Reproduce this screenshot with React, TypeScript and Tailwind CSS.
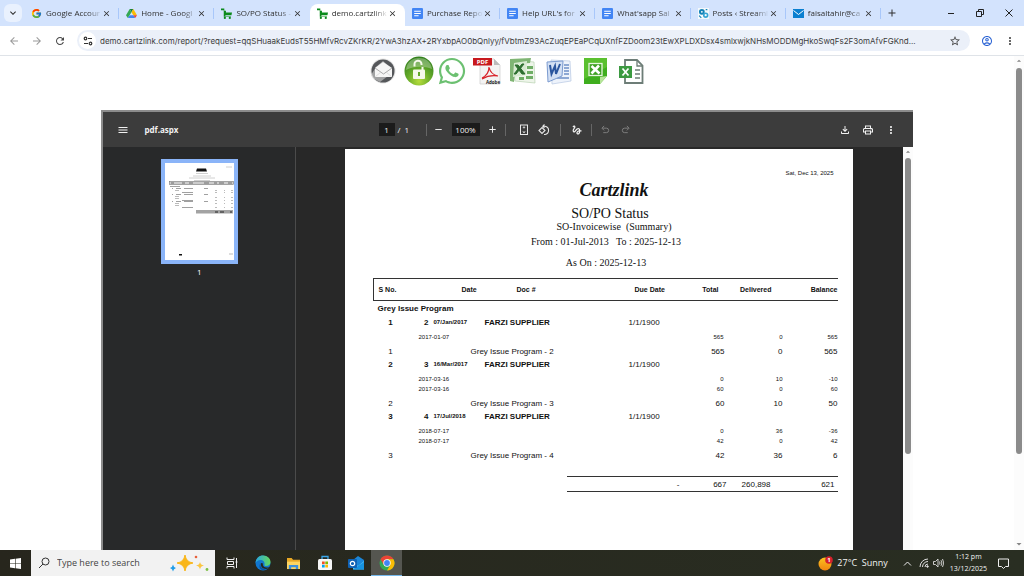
import type { ReactNode } from 'react';
import { FaWhatsapp } from 'react-icons/fa';
import { FcGoogle } from 'react-icons/fc';
import {
  MdAdd,
  MdArrowBack,
  MdArrowDropDown,
  MdArrowDropUp,
  MdArrowForward,
  MdClose,
  MdExpandMore,
  MdGesture,
  MdMenu,
  MdMoreVert,
  MdOutlineAccountCircle,
  MdOutlineFileDownload,
  MdOutlinePrint,
  MdRefresh,
  MdRemove,
  MdStarBorder,
} from 'react-icons/md';

const URL_TEXT =
  'demo.cartzlink.com/report/?request=qqSHuaakEudsT55HMfvRcvZKrKR/2YwA3hzAX+2RYxbpAO0bQnlyy/fVbtmZ93AcZuqEPEaPCqUXnfFZDoom23tEwXPLDXDsx4smlxwjkNHsMODDMgHkoSwqFs2F3omAfvFGKnd...';

/* ---------- Favicons ---------- */

function DriveIcon() {
  return (
    <svg viewBox="0 0 24 22" className="size-[11px]">
      <path d="M8 1h8l-4 7z" fill="#188038" />
      <path d="M8 1L0 15l4 6L12 8z" fill="#34a853" />
      <path d="M16 1l8 14h-8L12 8z" fill="#fbbc04" />
      <path d="M8 15L4 21h16l-4-6z" fill="#4285f4" />
      <path d="M16 15h8l-4 6z" fill="#ea4335" />
    </svg>
  );
}

function CartIcon() {
  return (
    <svg viewBox="0 0 20 20" className="size-[11px]" fill="#0b8a1c">
      <path d="M0 1h6v4h3v3h11l-1 5H8v2h10v1H5V4H0z" />
      <circle cx="7" cy="18" r="2" />
      <circle cx="16" cy="18" r="2" />
    </svg>
  );
}

function DocsIcon() {
  return (
    <svg viewBox="0 0 20 20" className="size-[11px]">
      <rect width="20" height="20" rx="2" fill="#4285f4" />
      <path d="M4 6h12M4 10h12M4 14h8" stroke="#fff" strokeWidth="2" />
    </svg>
  );
}

function PostsIcon() {
  return (
    <svg viewBox="0 0 20 20" className="size-[11px]">
      <rect width="20" height="20" fill="#f4f9fc" />
      <circle cx="7" cy="7" r="3.500" fill="none" stroke="#1583b7" strokeWidth="3.500" />
      <circle cx="14" cy="13" r="3.500" fill="none" stroke="#38a5d4" strokeWidth="3" />
      <path d="M2 14l4 4M14 3h3" stroke="#1583b7" strokeWidth="2" />
    </svg>
  );
}

function MailIcon() {
  return (
    <svg viewBox="0 0 22 18" className="h-[9px] w-[11px]">
      <rect width="22" height="18" fill="#0a7fd0" />
      <path d="M1 3l10 8 10-8" fill="none" stroke="#fff" strokeWidth="2" />
    </svg>
  );
}

/* ---------- Browser ---------- */

const tabs = [
  { title: 'Google Accour', icon: <FcGoogle className="size-[11px]" /> },
  { title: 'Home - Googl', icon: <DriveIcon /> },
  { title: 'SO/PO Status -', icon: <CartIcon /> },
  { title: 'demo.cartzlink', icon: <CartIcon />, active: true },
  { title: 'Purchase Repo', icon: <DocsIcon /> },
  { title: "Help URL's for", icon: <DocsIcon /> },
  { title: "What'sapp Sal", icon: <DocsIcon /> },
  { title: 'Posts ‹ Streaml', icon: <PostsIcon /> },
  { title: 'faisaltahir@ca', icon: <MailIcon /> },
];

function TabStrip() {
  return (
    <div className="flex h-[26px] items-center bg-[#d3e3fd] text-[#303030]">
      <button aria-label="Search tabs" className="mr-0.5 ml-1 flex size-[18px] items-center justify-center rounded-md bg-[#e9f1fe]">
        <MdExpandMore className="size-3" />
      </button>
      <div className="flex h-full min-w-0 flex-1 items-end">
        {tabs.map((tab, i) => (
          <div
            key={i}
            className={
              tab.active
                ? 'flex h-[22px] min-w-0 flex-1 items-center rounded-t-lg bg-white pb-1 pl-[7px]'
                : 'flex h-[22px] min-w-0 flex-1 items-center pb-1 pl-[7px]'
            }
          >
            <span className="shrink-0">{tab.icon}</span>
            <span className="ml-1 min-w-0 flex-1 mask-r-from-75% text-[8px] whitespace-nowrap">{tab.title}</span>
            <button aria-label={`Close ${tab.title}`} className="shrink-0">
              <MdClose className="size-[9px]" />
            </button>
            <span
              className={
                tab.active || tabs[i + 1]?.active
                  ? 'ml-[7px] h-[11px] w-px shrink-0'
                  : 'ml-[7px] h-[11px] w-px shrink-0 bg-[#a8c7fa]'
              }
            />
          </div>
        ))}
      </div>
      <button aria-label="New tab" className="ml-[5px]">
        <MdAdd className="size-3" />
      </button>
      <div className="mr-px ml-[38px] flex items-center">
        <button aria-label="Minimize" className="flex w-[29px] justify-center">
          <svg viewBox="0 0 8 8" className="size-2" stroke="#222">
            <path d="M1 4.500h6" />
          </svg>
        </button>
        <button aria-label="Restore" className="flex w-[29px] justify-center">
          <svg viewBox="0 0 8 8" className="size-2" fill="none" stroke="#222">
            <path d="M.5 2.500h5v5h-5zM2.500 2V.5h5v5H6" />
          </svg>
        </button>
        <button aria-label="Close window" className="flex w-[29px] justify-center">
          <svg viewBox="0 0 8 8" className="size-2" stroke="#222">
            <path d="M.5.5l7 7m0-7l-7 7" />
          </svg>
        </button>
      </div>
    </div>
  );
}

function AddressBar() {
  return (
    <div className="flex h-[30px] items-center border-b border-[#dfe3e8] bg-white pl-2 text-[#474747]">
      <button aria-label="Back" className="mr-[11px] text-[#9a9a9a]"><MdArrowBack className="size-3" /></button>
      <button aria-label="Forward" className="mr-[11px] text-[#9a9a9a]"><MdArrowForward className="size-3" /></button>
      <button aria-label="Reload" className="mr-[11px]"><MdRefresh className="size-3" /></button>
      <div className="flex h-[21px] min-w-0 flex-1 items-center rounded-full bg-[#ebf0f9] pl-0.5">
        <button aria-label="Site information" className="flex size-[17px] items-center justify-center rounded-full bg-white">
          <svg viewBox="0 0 10 10" className="size-[10px]" fill="none" stroke="#333" strokeWidth="1.2">
            <circle cx="2.500" cy="2.500" r="1.300" />
            <path d="M5 2.500h4M1 7.500h4" />
            <circle cx="7.500" cy="7.500" r="1.300" />
          </svg>
        </button>
        <input
          aria-label="Address"
          defaultValue={URL_TEXT}
          className="ml-1 min-w-0 flex-1 bg-transparent font-[Inter,sans-serif] text-[8px] text-[#3c3c3c] outline-none"
        />
        <button aria-label="Bookmark" className="mx-[9px]"><MdStarBorder className="size-3" /></button>
      </div>
      <button aria-label="Profile" className="ml-[11px] text-[#2a63d4]"><MdOutlineAccountCircle className="size-3" /></button>
      <button aria-label="Browser menu" className="mr-2 ml-[11px]"><MdMoreVert className="size-3" /></button>
    </div>
  );
}

function Scrollbar({ bottomArrow, thumb }: { bottomArrow?: boolean; thumb: string }) {
  return (
    <div className="flex w-[10px] shrink-0 flex-col items-center bg-[#fcfcfc] text-[#858585]">
      <MdArrowDropUp className="-mx-1 h-[10px] w-[14px]" />
      <div className={thumb} />
      {bottomArrow && <MdArrowDropDown className="mt-auto h-3 w-[14px]" />}
    </div>
  );
}

/* ---------- Export icons ---------- */

function ExportBar() {
  return (
    <div className="flex h-[30px] justify-center pl-1">
      <button aria-label="Send by email" className="flex w-9 items-center justify-center">
        <svg viewBox="0 0 26 26" className="size-[26px]">
          <circle cx="13" cy="13" r="12.500" fill="#e3e3e3" />
          <circle cx="13" cy="13" r="11.500" fill="#55575a" />
          <path d="M1 17L6 9l7-6 7 6-2 9-8 6-6-3z" fill="#d6d6d6" opacity=".6" />
          <path d="M5 10l8-6 9 6v9H5z" fill="#f6f6f6" />
          <path d="M5 10l8.500 6L22 10" fill="none" stroke="#aaa" />
          <path d="M5 19l6-5m11 5l-6-5" fill="none" stroke="#ccc" strokeWidth=".6" />
        </svg>
      </button>
      <button aria-label="Unlock" className="flex w-9 items-center justify-center">
        <svg viewBox="0 0 30 30" className="size-[30px]">
          <defs>
            <radialGradient id="lockFill" cx=".5" cy=".85" r=".85">
              <stop offset="0" stopColor="#b5dc3c" />
              <stop offset=".5" stopColor="#62a828" />
              <stop offset="1" stopColor="#2f7d1c" />
            </radialGradient>
          </defs>
          <circle cx="15" cy="15" r="14.500" fill="url(#lockFill)" />
          <path d="M2 14C3 5 9 2 15 2s12 3 13 11c-8-3-18-3-26 1z" fill="#fff" opacity=".3" />
          <path d="M10.500 10.500V8.500a3.500 3.500 0 0 1 7-.5v1M18.500 14v-3" fill="none" stroke="#f5f8ea" strokeWidth="2" />
          <rect x="9" y="13.500" width="12" height="9.500" rx="1" fill="#f5f8ea" />
          <path d="M15 16v4" stroke="#62a828" strokeWidth="2" />
        </svg>
      </button>
      <button aria-label="Share on WhatsApp" className="flex w-9 items-center justify-start">
        <FaWhatsapp className="size-[30px] text-[#6cc071]" />
      </button>
      <button aria-label="Export PDF" className="flex w-9 items-center justify-start">
        <svg viewBox="0 0 28 28" className="size-7">
          <path d="M7 2h14l6 6v19H7z" fill="#f3f3f3" stroke="#ccc" strokeWidth=".7" />
          <path d="M21 2v6h6z" fill="#bbb" />
          <rect x="0" y="1" width="19" height="7.500" fill="#c8191e" />
          <text x="9.500" y="7" textAnchor="middle" fontSize="6" fontWeight="700" fill="#fff">PDF</text>
          <path d="M9 21c4-2 7-6 7-11 1 5 4 8 9 9-6-1-11 0-16 3" fill="none" stroke="#d8232a" strokeWidth="1.200" />
          <text x="20" y="26.500" textAnchor="middle" fontSize="4.500" fontWeight="700" fill="#222">Adobe</text>
        </svg>
      </button>
      <button aria-label="Export Excel" className="flex w-9 items-center justify-start">
        <svg viewBox="0 0 28 28" className="size-7">
          <path d="M4 3l21 2 1 21-20-2z" fill="#eef5ea" stroke="#b9d3b2" strokeWidth=".7" />
          <path d="M1 2l21-1-1 5-14 1-2 18-4-1z" fill="#7fb574" />
          <path d="M5 6l13-2-1 14-13 2z" fill="#d7ead1" />
          <path d="M6 8h3l7 9h-3zM15 7l-8 10H5l8-10z" fill="#2c6e2f" stroke="#2c6e2f" />
          <path d="M18 9h6v3h-6zM18 14h6v3h-6zM17 19h7v3h-7zM10 20h5v3h-5z" fill="#6fae66" />
        </svg>
      </button>
      <button aria-label="Export Word" className="flex w-9 items-center justify-start">
        <svg viewBox="0 0 28 28" className="size-7">
          <path d="M6 3l19 1 1 20-19 3z" fill="#eef3fb" stroke="#b6c7e2" strokeWidth=".7" />
          <path d="M19 8h5M19 11h5M19 14h5M19 17h5M12 21h12" stroke="#6e90c8" strokeWidth="1.300" />
          <path d="M2 5l16-1-1 15-14 6z" fill="#d3e0f4" stroke="#7b9bd0" />
          <path d="M5 8l1.500 9L10 9l1 8 4-10" fill="none" stroke="#2a559e" strokeWidth="2" />
        </svg>
      </button>
      <button aria-label="Export Excel data" className="flex w-9 items-center justify-start">
        <svg viewBox="0 0 28 28" className="size-7">
          <path d="M3 1h23v18l-7 8H3z" fill="#3fae1e" />
          <path d="M3 1h23v9L3 22z" fill="#6ccb3a" opacity=".6" />
          <path d="M26 19l-7 8v-7z" fill="#b7e59a" />
          <rect x="8" y="6.500" width="13" height="12" fill="#3fa024" stroke="#e7f6df" strokeWidth="1.300" />
          <path d="M10.500 9l8 7.500M18 8.500l-7.500 8" stroke="#fff" strokeWidth="2.600" />
        </svg>
      </button>
      <button aria-label="Export spreadsheet" className="flex w-9 items-center justify-start">
        <svg viewBox="0 0 28 28" className="size-7">
          <path d="M8 3h12l5.500 5.500V26H8z" fill="#fff" stroke="#6d7d77" strokeWidth="1.800" />
          <path d="M20 3v6h6" fill="none" stroke="#6d7d77" strokeWidth="1.300" />
          <path d="M18 13h5M18 17h5M18 21h5" stroke="#6d7d77" strokeWidth="1.600" />
          <rect x="2" y="9" width="13" height="12" fill="#3c9a41" />
          <path d="M5.500 11.500l6 7M11.500 11.500l-6 7" stroke="#fff" strokeWidth="1.800" />
        </svg>
      </button>
    </div>
  );
}

/* ---------- PDF viewer ---------- */

function ToolButton({ label, children }: { label: string; children: ReactNode }) {
  return (
    <button aria-label={label} className="flex size-5 items-center justify-center">
      {children}
    </button>
  );
}

function PdfToolbar() {
  return (
    <div className="grid h-[35px] shrink-0 grid-cols-[1fr_auto_1fr] items-center bg-[#3c3c3c] text-[#f1f1f1]">
      <div className="flex items-center gap-[11px] pl-[10px]">
        <ToolButton label="Menu"><MdMenu className="size-3" /></ToolButton>
        <span className="text-[8px] font-bold">pdf.aspx</span>
      </div>
      <div className="flex items-center pr-0.5 text-[8px]">
        <input aria-label="Page number" defaultValue="1" className="h-[13px] w-4 bg-[#1b1b1b] text-center outline-none" />
        <span className="ml-[3px] w-3 whitespace-pre">/  1</span>
        <span className="mr-0.5 ml-4 h-3 w-px bg-[#666]" />
        <ToolButton label="Zoom out"><MdRemove className="size-[11px]" /></ToolButton>
        <input aria-label="Zoom level" defaultValue="100%" className="mx-[3px] h-[13px] w-7 bg-[#1b1b1b] text-center outline-none" />
        <ToolButton label="Zoom in"><MdAdd className="size-[11px]" /></ToolButton>
        <span className="mr-2 ml-0.5 h-3 w-px bg-[#666]" />
        <ToolButton label="Fit to page">
          <svg viewBox="0 0 10 12" className="h-3 w-[10px]" fill="none" stroke="#e8e8e8">
            <rect x="1.500" y="1" width="7" height="9.500" />
            <path d="M5 2.500v2M3.800 4l1.200-1.200L6.200 4M5 9V7M3.800 7.600L5 8.800l1.200-1.200" strokeWidth=".8" />
          </svg>
        </ToolButton>
        <ToolButton label="Rotate">
          <svg viewBox="0 0 12 12" className="size-3" fill="none" stroke="#e8e8e8" strokeWidth="1.100">
            <path d="M4 3.500L7 6.500l-3 3-3-3z" />
            <path d="M5 2.200h2a4.200 4.200 0 0 1 0 8.300H6M6.500.5L4.800 2.200l1.700 1.700" />
          </svg>
        </ToolButton>
        <span className="mx-[6px] h-3 w-px bg-[#666]" />
        <ToolButton label="Draw"><MdGesture className="size-3" /></ToolButton>
        <span className="mx-1 h-3 w-px bg-[#666]" />
        <div className="flex text-[#7d7d7d]">
          <ToolButton label="Undo">
            <svg viewBox="0 0 10 10" className="size-[9px]" fill="none" stroke="currentColor" strokeWidth="1.100">
              <path d="M3.500 1L1 3.500 3.500 6M1.500 3.500H6a2.500 2.500 0 0 1 0 5H2.500" />
            </svg>
          </ToolButton>
          <ToolButton label="Redo">
            <svg viewBox="0 0 10 10" className="size-[9px]" fill="none" stroke="currentColor" strokeWidth="1.100">
              <path d="M6.500 1L9 3.500 6.500 6M8.500 3.500H4a2.500 2.500 0 0 0 0 5h3.500" />
            </svg>
          </ToolButton>
        </div>
      </div>
      <div className="flex justify-end gap-[3px] pr-3">
        <ToolButton label="Download"><MdOutlineFileDownload className="size-3" /></ToolButton>
        <ToolButton label="Print"><MdOutlinePrint className="size-3" /></ToolButton>
        <ToolButton label="More"><MdMoreVert className="size-3" /></ToolButton>
      </div>
    </div>
  );
}

function Thumbnail() {
  return (
    <button aria-label="Page 1" className="border-4 border-[#8ab4f8] bg-white">
      <svg viewBox="0 0 69 97" className="h-[97px] w-[69px]">
        <path d="M32 5.500h9l1 3H31z" fill="#111" />
        <path d="M31 10.500h12M28 13h18M24 15h26M29 17.500h16M61 4h6" stroke="#c4c4c4" strokeWidth=".8" />
        <rect x="4.500" y="18.500" width="64" height="3" fill="#ccc" stroke="#777" strokeWidth=".6" />
        <path d="M6 20h3M17 20h3M24 20h4M39 20h5M49 20h3M54 20h5M63 20h4" stroke="#555" strokeWidth=".8" />
        <path
          d="M5 23.500h10M7 25.500h1M11 25.500h5M19 25.500h9M39 25.500h4M7 31.500h1M11 31.500h5M19 31.500h9M39 31.500h4M7 38.500h1M11 38.500h5M19 38.500h9M39 38.500h4M17 29.500h11M17 37.500h11M17 44.500h11"
          stroke="#888"
          strokeWidth=".8"
        />
        <path
          d="M10 27.500h4M10 33.500h4M10 35.500h4M10 40.500h4M10 42.500h4M50 27.500h2M59 27.500h1M66 27.500h2M50 29.500h2M59 29.500h1M66 29.500h2M50 34.500h2M59 34.500h1M66 34.500h2M50 37.500h2M59 37.500h1M66 37.500h2M50 40.500h2M59 40.500h1M66 40.500h2M50 44.500h2M59 44.500h1M66 44.500h2"
          stroke="#aaa"
          strokeWidth=".8"
        />
        <rect x="31" y="47" width="37" height="3.500" fill="#a3a3a3" />
        <path d="M50 49h3M55 49h4M65 49h2" stroke="#222" />
        <rect x="14" y="91" width="3" height="1.500" fill="#111" />
        <path d="M64 91h4" stroke="#bbb" />
      </svg>
    </button>
  );
}

/* ---------- Report ---------- */

const invoices = [
  {
    sno: 1,
    no: 2,
    date: '07/Jan/2017',
    lines: [{ date: '2017-01-07', total: 565, delivered: 0, balance: 565 }],
    sum: [565, 0, 565],
  },
  {
    sno: 2,
    no: 3,
    date: '16/Mar/2017',
    lines: [
      { date: '2017-03-16', total: 0, delivered: 10, balance: -10 },
      { date: '2017-03-16', total: 60, delivered: 0, balance: 60 },
    ],
    sum: [60, 10, 50],
  },
  {
    sno: 3,
    no: 4,
    date: '17/Jul/2018',
    lines: [
      { date: '2018-07-17', total: 0, delivered: 36, balance: -36 },
      { date: '2018-07-17', total: 42, delivered: 0, balance: 42 },
    ],
    sum: [42, 36, 6],
  },
];

function ReportTable() {
  return (
    <table className="mt-[9px] w-full table-fixed border-separate border-spacing-0 text-[8px] leading-[13px] whitespace-nowrap">
      <colgroup>
        <col className="w-9" />
        <col className="w-5" />
        <col className="w-[42px]" />
        <col className="w-24" />
        <col className="w-[58px]" />
        <col className="w-[65px]" />
        <col className="w-[37px]" />
        <col className="w-14" />
        <col className="w-[55px]" />
      </colgroup>
      <thead>
        <tr className="h-[23px] text-left text-[7px] [&>th]:border-y [&>th]:border-[#333]">
          <th colSpan={2} className="border-l pl-[5px]">S No.</th>
          <th className="pl-[33px]">Date</th>
          <th colSpan={2} className="pl-[46px]">Doc #</th>
          <th className="pl-[10px]">Due Date</th>
          <th className="pr-2 text-right">Total</th>
          <th className="pr-[11px] text-right">Delivered</th>
          <th className="text-right">Balance</th>
        </tr>
      </thead>
      <tbody>
        <tr className="h-[15px]">
          <th colSpan={9} className="pl-[5px] text-left">Grey Issue Program</th>
        </tr>
      </tbody>
      {invoices.map((inv) => (
        <tbody key={inv.sno}>
          <tr className="font-bold [&>td]:pb-[3px]">
            <td className="text-center">{inv.sno}</td>
            <td className="text-right">{inv.no}</td>
            <td className="pl-[5px] text-[6px]">{inv.date}</td>
            <td colSpan={2} className="pl-3.5">FARZI SUPPLIER</td>
            <td colSpan={4} className="pl-1 font-normal">1/1/1900</td>
          </tr>
          {inv.lines.map((line, i) => (
            <tr key={i} className="text-[6px] leading-[10px]">
              <td />
              <td colSpan={5} className="pl-[10px]">{line.date}</td>
              <td className="pr-[3px] text-right">{line.total}</td>
              <td className="text-right">{line.delivered}</td>
              <td className="text-right">{line.balance}</td>
            </tr>
          ))}
          <tr className="leading-[12px] [&>td]:pt-1">
            <td className="text-center">{inv.sno}</td>
            <td colSpan={2} />
            <td colSpan={3}>Grey Issue Program - {inv.no}</td>
            <td className="pr-0.5 text-right">{inv.sum[0]}</td>
            <td className="text-right">{inv.sum[1]}</td>
            <td className="text-right">{inv.sum[2]}</td>
          </tr>
        </tbody>
      ))}
      <tfoot>
        <tr className="h-[14px]">
          <td colSpan={9} />
        </tr>
        <tr className="h-4 [&>td+td]:border-y [&>td+td]:border-[#333]">
          <td colSpan={4} />
          <td />
          <td className="pr-[10px] text-right">-</td>
          <td className="text-right">667</td>
          <td className="pr-3 text-right">260,898</td>
          <td className="pr-[3px] text-right">621</td>
        </tr>
      </tfoot>
    </table>
  );
}

function ReportPage() {
  return (
    <article className="mt-0.5 h-[660px] w-[508px] shrink-0 bg-white pt-[19px] pr-[15px] pl-7 font-['Liberation_Sans',Arial,sans-serif] text-[#111]">
      <p className="pr-1 text-right text-[6px] leading-[10px]">Sat, Dec 13, 2025</p>
      <header className="pl-[10px] text-center font-['Liberation_Serif',serif] text-[10px] leading-[12px] whitespace-pre">
        <p className="pl-2 text-lg leading-[24px] font-bold italic">Cartzlink</p>
        <h1 className="mt-1 text-sm leading-[15px]">SO/PO Status</h1>
        <p className="pl-2">SO-Invoicewise  (Summary)</p>
        <p className="mt-[3px] pr-2">From : 01-Jul-2013   To : 2025-12-13</p>
        <p className="mt-[9px] pr-2">As On : 2025-12-13</p>
      </header>
      <ReportTable />
    </article>
  );
}

function PdfViewer() {
  return (
    <section className="mx-auto mt-6 flex min-h-0 w-4/5 flex-1 flex-col border-t-2 border-l-2 border-[#8c8c8c] bg-[#282828]">
      <PdfToolbar />
      <div className="flex min-h-0 flex-1">
        <aside className="flex w-[193px] shrink-0 flex-col items-center border-r border-[#4b4b4b] bg-[#28292a] pt-3 text-[8px] leading-[12px] text-white">
          <Thumbnail />
          <span className="mt-0.5">1</span>
        </aside>
        <div className="flex min-w-0 flex-1 justify-center overflow-hidden pr-0.5">
          <ReportPage />
        </div>
        <Scrollbar thumb="mt-px h-[296px] w-1.5 rounded-full bg-[#8b8b8b]" />
      </div>
    </section>
  );
}

/* ---------- Taskbar ---------- */

function TaskItem({ label, active, children }: { label: string; active?: boolean; children: ReactNode }) {
  return (
    <button
      aria-label={label}
      className={
        active
          ? 'flex h-full w-[31px] items-center justify-center border-b border-[#76b9ed] bg-[#555650]'
          : 'flex h-full w-[31px] items-center justify-center'
      }
    >
      {children}
    </button>
  );
}

function Taskbar() {
  return (
    <footer className="flex h-[26px] shrink-0 items-center bg-linear-to-r from-[#27261d] to-[#292e22] text-[#f3f3f3]">
      <TaskItem label="Start">
        <svg viewBox="0 0 11 11" className="size-[11px]" fill="#fff">
          <path d="M0 1.500L5 .8v4.400H0zM5.600.7L11 0v5.200H5.600zM0 5.800h5v4.400l-5-.7zM5.600 5.800H11V11l-5.400-.7z" />
        </svg>
      </TaskItem>
      <label className="mr-px flex h-full w-[184px] items-center bg-[#f2f2f2] pr-1.5 pl-[7px]">
        <svg viewBox="0 0 12 12" className="size-3" fill="none" stroke="#333">
          <circle cx="7.500" cy="4.500" r="3.500" />
          <path d="M5 7L1 11" />
        </svg>
        <input
          aria-label="Search"
          placeholder="Type here to search"
          className="ml-[7px] min-w-0 flex-1 text-[9px] outline-none placeholder:text-[#444]"
        />
        <svg viewBox="0 0 40 18" className="h-[18px] w-10">
          <path d="M16 1q1 7 8 8-7 1-8 8-1-7-8-8 7-1 8-8z" fill="#f9b61b" stroke="#f9b61b" />
          <path d="M31 8q.5 3 4 3.500-3.500.5-4 4-.5-3.500-4-4 3.500-.5 4-3.500z" fill="#fbc540" />
          <path d="M4 10.500q.5 3 3 3.500-2.500.5-3 3.500-.5-3-3-3.500 2.500-.5 3-3.500z" fill="#1f9ce8" />
          <circle cx="27" cy="3" r="1.300" fill="#e8603c" />
          <circle cx="38" cy="15.500" r="1.400" fill="#7bc043" />
        </svg>
      </label>
      <TaskItem label="Task view">
        <svg viewBox="0 0 12 12" className="size-3" fill="none" stroke="#eee">
          <path d="M1 .5v2h7v-2M1.500 4.500h6v3h-6zM1 11.500v-2h7v2M10.500 1v10M9.500 5h2" />
        </svg>
      </TaskItem>
      <TaskItem label="Edge">
        <svg viewBox="0 0 16 16" className="size-4">
          <defs>
            <linearGradient id="edgeTop" x1="0" x2="1">
              <stop offset="0" stopColor="#27a5e0" />
              <stop offset="1" stopColor="#66d95b" />
            </linearGradient>
          </defs>
          <circle cx="8" cy="8" r="7.500" fill="#1177cf" />
          <path d="M.5 8C1 3 4 .5 8 .5c4.500 0 7.500 3 7.500 6.500 0 2.500-2 4-4.500 4-1.500 0-2-.7-1.500-1.500C10 7 8 5 5.500 5 3 5 1 6.500.5 8z" fill="url(#edgeTop)" />
          <path d="M6 8c-1 3 1.500 6 5 6 1.500 0 2.500-.7 3.300-1.700-3.800 1-7.300-.8-6.300-3.800z" fill="#27261d" />
          <path d="M5.500 8c-1 4 2 6.500 6 6-5 3-9-1-6-6z" fill="#0b4f9c" />
        </svg>
      </TaskItem>
      <TaskItem label="File Explorer">
        <svg viewBox="0 0 16 14" className="h-[13px] w-[15px]">
          <path d="M1 1h5l1.500 2H15v10H1z" fill="#e9a825" />
          <path d="M1 5h14v8H1z" fill="#fcd462" />
          <path d="M3 13V8.500h10V13h-2.500v-2h-5v2z" fill="#3d8fdb" />
        </svg>
      </TaskItem>
      <TaskItem label="Store">
        <svg viewBox="0 0 16 16" className="size-4">
          <path d="M5 4V1.500h6V4" fill="none" stroke="#3ba8ea" strokeWidth="1.300" />
          <rect x="1" y="4" width="14" height="11" rx="1.500" fill="#f6f6f6" />
          <path d="M5 6.500h2.700v2.700H5z" fill="#f25022" />
          <path d="M8.300 6.500H11v2.700H8.300z" fill="#7fba00" />
          <path d="M5 9.800h2.700v2.700H5z" fill="#00a4ef" />
          <path d="M8.300 9.800H11v2.700H8.300z" fill="#ffb900" />
        </svg>
      </TaskItem>
      <TaskItem label="Outlook">
        <svg viewBox="0 0 16 16" className="size-4">
          <path d="M5 5l5-4 6 4v9H5z" fill="#1b86d8" />
          <path d="M5 7l5 4 6-5v8.500H5z" fill="#4fc0f5" />
          <path d="M5 14.500L16 7v7.500z" fill="#1793e0" />
          <rect x="0" y="4" width="9" height="9" rx="1" fill="#0f62b5" />
          <circle cx="4.500" cy="8.500" r="2.200" fill="none" stroke="#fff" strokeWidth="1.200" />
        </svg>
      </TaskItem>
      <TaskItem label="Chrome" active>
        <svg viewBox="0 0 16 16" className="size-4">
          <circle cx="8" cy="8" r="7.500" fill="#34a853" />
          <path d="M8 .5a7.500 7.500 0 0 1 6.500 3.750H8L4.700 9.800 1.500 4.250A7.500 7.500 0 0 1 8 .5z" fill="#ea4335" />
          <path d="M14.500 4.250A7.500 7.500 0 0 1 8 15.500l3.250-5.600L8 4.250z" fill="#fbbc04" />
          <circle cx="8" cy="8" r="3.700" fill="#fff" />
          <circle cx="8" cy="8" r="2.900" fill="#4285f4" />
        </svg>
      </TaskItem>
      <button className="ml-auto flex items-center gap-1 text-[9px] whitespace-pre">
        <svg viewBox="0 0 15 15" className="size-[15px]">
          <defs>
            <linearGradient id="sunFill" x1="0" x2="0" y1="0" y2="1">
              <stop offset="0" stopColor="#fbc21f" />
              <stop offset="1" stopColor="#f08410" />
            </linearGradient>
          </defs>
          <circle cx="7" cy="8" r="6.500" fill="url(#sunFill)" />
          <circle cx="11" cy="4" r="3.800" fill="#d3202c" />
          <text x="11" y="6.200" textAnchor="middle" fontSize="6" fontWeight="700" fill="#fff">1</text>
        </svg>
        <span>27°C  Sunny</span>
      </button>
      <button aria-label="Show hidden icons" className="ml-[15px]">
        <svg viewBox="0 0 9 9" className="size-[9px]" fill="none" stroke="#eee">
          <path d="M1 6.500L4.500 3 8 6.500" />
        </svg>
      </button>
      <button aria-label="Network" className="ml-[7px]">
        <svg viewBox="0 0 10 10" className="size-[10px]" fill="none" stroke="#ddd">
          <path d="M1 9a8 8 0 0 1 8-8M3.500 9A5.500 5.500 0 0 1 9 3.500M6 9a3 3 0 0 1 3-3" />
          <circle cx="8.500" cy="8.500" r=".8" fill="#ddd" />
        </svg>
      </button>
      <button aria-label="Volume" className="ml-1">
        <svg viewBox="0 0 11 10" className="h-[10px] w-[11px]" fill="none" stroke="#ddd" strokeWidth=".9">
          <path d="M.5 3.500h2L5 1v8L2.500 6.500h-2zM6.500 3.500q1 1.500 0 3M8 2.200q1.800 2.800 0 5.600M9.500 1q2.500 4 0 8" />
        </svg>
      </button>
      <time className="ml-[6px] text-center text-[7px] leading-[12px]">
        1:12 pm
        <br />
        13/12/2025
      </time>
      <button aria-label="Notifications" className="mr-[15px] ml-[11px]">
        <svg viewBox="0 0 11 11" className="size-[11px]" fill="none" stroke="#eee">
          <path d="M.5 1h10v7.500h-3L5.500 10.500 3.500 8.500h-3z" />
        </svg>
      </button>
    </footer>
  );
}

export default function App() {
  return (
    <div className="flex h-screen flex-col overflow-hidden bg-white font-['Open_Sans','Noto_Sans',sans-serif]">
      <TabStrip />
      <AddressBar />
      <div className="flex min-h-0 flex-1">
        <main className="flex min-w-0 flex-1 flex-col">
          <ExportBar />
          <PdfViewer />
        </main>
        <Scrollbar bottomArrow thumb="mt-0.5 h-[386px] w-1.5 rounded-full bg-[#8b8b8b]" />
      </div>
      <Taskbar />
    </div>
  );
}
